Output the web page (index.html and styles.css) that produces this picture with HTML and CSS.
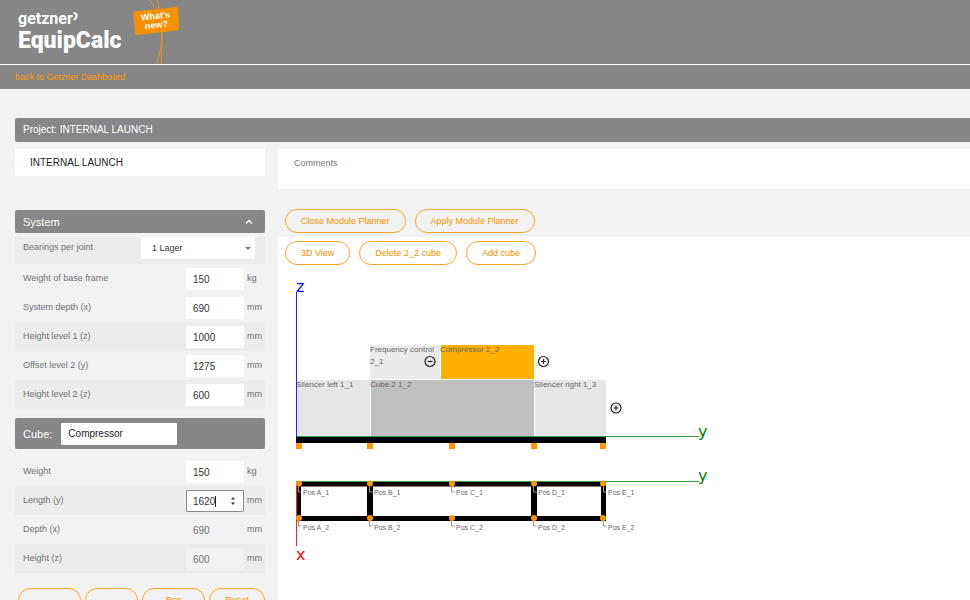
FILE: index.html
```html
<!DOCTYPE html>
<html lang="en">
<head>
<meta charset="utf-8">
<title>getzner EquipCalc</title>
<link rel="stylesheet" href="styles.css">
</head>
<body>
<header class="header">
  <div class="brand">
    <div class="brand-name">getzner<svg class="brand-mark" viewBox="0 0 5 10" aria-hidden="true"><path d="M0.5 1C3 1.2 4 2.5 3.6 4.2C3.2 5.8 2 7 1 8"/></svg></div>
    <div class="brand-product">EquipCalc</div>
  </div>
  <a class="news" href="#news">
    <svg class="news-strings" viewBox="0 0 46 64" aria-hidden="true">
      <path d="M17 0C19 4 21 6 22 10M24 0C26 3 26 6 25 10M29 32C29 45 27 54 23 64M29 32C29 44 28.500 54 28 64"/>
      <path class="news-tag" d="M1.500 11.500L43 7Q45 7 45.200 8.500L46 28.500Q46 30 44.500 30.500L4.500 35Q2.500 35 2.300 33.500L0 13.500Q0 12 1.500 11.500Z"/>
    </svg>
    <span class="news-text">What's<br>new?</span>
  </a>
</header>
<nav class="nav"><a href="#dashboard">back to Getzner Dashboard</a></nav>

<main class="page">
  <h1 class="bar project-bar">Project: INTERNAL LAUNCH</h1>
  <div class="columns">
    <aside class="side">
      <input class="project-name" aria-label="Project name" value="INTERNAL LAUNCH">

      <h2 class="bar system-bar">System
        <svg class="chevron" viewBox="0 0 8 6" aria-hidden="true"><path d="M1 4.500L4 1.500L7 4.500"/></svg>
      </h2>
      <div class="row shaded first">
        <label for="bearings">Bearings per joint</label>
        <div class="select-wrap"><select id="bearings"><option>1 Lager</option></select></div>
      </div>
      <div class="row"><label for="frame">Weight of base frame</label><input id="frame" value="150"><span class="unit">kg</span></div>
      <div class="row"><label for="sdepth">System depth (x)</label><input id="sdepth" value="690"><span class="unit">mm</span></div>
      <div class="row shaded"><label for="h1">Height level 1 (z)</label><input id="h1" value="1000"><span class="unit">mm</span></div>
      <div class="row"><label for="o2">Offset level 2 (y)</label><input id="o2" value="1275"><span class="unit">mm</span></div>
      <div class="row shaded"><label for="h2">Height level 2 (z)</label><input id="h2" value="600"><span class="unit">mm</span></div>

      <div class="bar cube-bar"><label for="cube">Cube:</label><input id="cube" value="Compressor"></div>
      <div class="row"><label for="weight">Weight</label><input id="weight" value="150"><span class="unit">kg</span></div>
      <div class="row shaded">
        <label for="length">Length (y)</label>
        <div class="stepper">
          <input id="length" value="1620"><i class="caret"></i>
          <svg viewBox="0 0 6 10" aria-hidden="true"><path d="M1 3.500L3 1L5 3.500ZM1 6.500L3 9L5 6.500Z"/></svg>
        </div>
        <span class="unit">mm</span>
      </div>
      <div class="row"><label for="depth">Depth (x)</label><input id="depth" value="690" disabled><span class="unit">mm</span></div>
      <div class="row shaded"><label for="height">Height (z)</label><input id="height" value="600" disabled><span class="unit">mm</span></div>
      <div class="side-actions">
        <button class="pill" type="button" aria-label="Previous"></button>
        <button class="pill" type="button" aria-label="Next"></button>
        <button class="pill" type="button">Bsp</button>
        <button class="pill" type="button">Reset</button>
      </div>
    </aside>

    <section class="work">
      <textarea class="comments" aria-label="Comments" placeholder="Comments"></textarea>
      <div class="toolbar">
        <button class="pill" type="button">Close Module Planner</button>
        <button class="pill" type="button">Apply Module Planner</button>
      </div>
      <div class="planner">
        <div class="toolbar">
          <button class="pill" type="button">3D View</button>
          <button class="pill" type="button">Delete 2_2 cube</button>
          <button class="pill" type="button">Add cube</button>
        </div>
        <svg class="drawing" width="440" height="330" viewBox="0 0 440 330" role="img" aria-label="Front and plan view">
          <!-- front view -->
          <rect class="light" x="19" y="110" width="73" height="56"/>
          <rect class="mid" x="93" y="110" width="163" height="56"/>
          <rect class="light" x="257" y="110" width="71" height="56"/>
          <rect class="pale" x="92" y="75" width="70" height="34"/>
          <rect class="active" x="163" y="75" width="93" height="34"/>
          <g class="caption">
            <text x="18" y="117">Silencer left 1_1</text>
            <text x="92" y="117">Cube 2 1_2</text>
            <text x="256" y="117">Silencer right 1_3</text>
            <text x="92" y="82">Frequency control</text>
            <text x="92" y="94">2_1</text>
            <text x="162" y="82">Compressor 2_2</text>
          </g>
          <rect x="18" y="167" width="310" height="6"/>
          <path class="foot" d="M18 173h6v6h-6zM89 173h6v6h-6zM171 173h6v6h-6zM253 173h6v6h-6zM322 173h6v6h-6z"/>
          <path class="axis-y" d="M18 166.500H421"/>
          <path class="axis-z" d="M18.500 22V167"/>
          <text class="axis name-z" x="18" y="22">z</text>
          <text class="axis name-y" x="420" y="167">y</text>
          <g class="knob">
            <circle cx="152" cy="91.500" r="5"/><path d="M149.500 91.500h5"/>
            <circle cx="265.500" cy="91.500" r="5"/><path d="M263 91.500h5M265.500 89v5"/>
            <circle cx="338" cy="138" r="5"/><path d="M335.500 138h5M338 135.500v5"/>
          </g>
          <!-- plan view -->
          <path fill-rule="evenodd" d="M18 212H328V251H18ZM23 216.500V246H89V216.500ZM95 216.500V246H253V216.500ZM259 216.500V246H323V216.500Z"/>
          <path class="axis-y" d="M18 211.500H421"/>
          <path class="axis-x" d="M18.500 212V276"/>
          <text class="axis name-y" x="420" y="211">y</text>
          <text class="axis name-x" x="18" y="290">x</text>
          <path class="leader" d="M20.500 214v8h3M91.500 214v8h3M173.500 214v8h3M255.500 214v8h3M325.500 214v8h3M20.500 248v8h3M91.500 248v8h3M173.500 248v8h3M255.500 248v8h3M325.500 248v8h3"/>
          <g class="foot">
            <circle cx="21" cy="213.500" r="3"/><circle cx="92" cy="213.500" r="3"/><circle cx="174" cy="213.500" r="3"/><circle cx="256" cy="213.500" r="3"/><circle cx="325" cy="213.500" r="3"/>
            <circle cx="21" cy="248" r="3"/><circle cx="92" cy="248" r="3"/><circle cx="174" cy="248" r="3"/><circle cx="256" cy="248" r="3"/><circle cx="325" cy="248" r="3"/>
          </g>
          <g class="pos">
            <text x="25" y="225">Pos A_1</text><text x="96" y="225">Pos B_1</text><text x="178" y="225">Pos C_1</text><text x="260" y="225">Pos D_1</text><text x="330" y="225">Pos E_1</text>
            <text x="25" y="260">Pos A_2</text><text x="96" y="260">Pos B_2</text><text x="178" y="260">Pos C_2</text><text x="260" y="260">Pos D_2</text><text x="330" y="260">Pos E_2</text>
          </g>
        </svg>
      </div>
    </section>
  </div>
</main>
</body>
</html>
```
FILE: styles.css
```css
* { box-sizing: border-box; }
body {
  margin: 0;
  height: 100vh;
  overflow: hidden;
  background: #f2f2f2;
  color: #707173;
  font: 9px/12px "Liberation Sans", Arial, sans-serif;
}
input, select, textarea, button { font: inherit; color: inherit; margin: 0; border: 0; }

.header { display: flex; gap: 12px; height: 64px; padding-left: 18px; background: #868686; }
.brand { padding-top: 10px; color: #fff; font-family: Roboto, sans-serif; font-weight: 700; }
.brand-name { font-size: 16px; line-height: 18px; }
.brand-mark { width: 5px; height: 10px; margin-bottom: 2px; fill: none; stroke: #fff; stroke-width: 2; }
.brand-product { font-size: 23px; line-height: 26px; font-weight: 900; }
.news { position: relative; width: 46px; height: 64px; color: #fff; text-decoration: none; }
.news-strings { display: block; width: 46px; height: 64px; fill: none; stroke: #e8961e; stroke-width: 1; }
.news-tag { fill: #f59100; stroke: none; }
.news-text {
  position: absolute; left: 0; top: 12px; width: 46px;
  font-weight: 700; line-height: 9px; text-align: center; transform: rotate(-6deg);
}
.nav { height: 24px; margin-top: 1px; padding: 6px 15px; background: #868686; box-shadow: 0 -1px #fff; }
.nav a { color: #f90; text-decoration: none; }

.page { padding: 29px 0 0 15px; }
.bar {
  display: flex; align-items: center; margin: 0; padding: 0 8px;
  background: #868788; color: #fff; border-radius: 2px;
  font-size: 11px; font-weight: 400; line-height: 14px;
}
.project-bar { height: 24px; border-radius: 2px 0 0 2px; font-size: 10px; }
.columns { display: grid; grid-template-columns: 250px 1fr; column-gap: 13px; padding-top: 7px; }
.project-name { display: block; width: 100%; height: 27px; padding: 0 15px; background: #fff; color: #222; font-size: 10px; }
.system-bar { justify-content: space-between; height: 23px; margin-top: 34px; padding-right: 12px; }
.chevron { width: 8px; height: 6px; fill: none; stroke: #fff; stroke-width: 1.3; }

.row { display: flex; align-items: center; height: 29px; padding-left: 8px; }
.row.first { height: 27px; margin-top: 4px; align-items: flex-start; padding-right: 10px; }
.row.first label { padding-top: 4px; }
.shaded { background: #ececec; }
.row label { flex: 1; padding-bottom: 2px; }
.row input { width: 58px; height: 22px; padding: 2px 7px 0; background: #fff; color: #333; font-size: 10px; border-radius: 1px; }
.row input:disabled { background: #f2f2f2; color: #707173; }
.unit { width: 21px; padding: 0 0 2px 3px; }
.select-wrap { position: relative; width: 114px; height: 22px; background: #fff; }
.select-wrap::after {
  content: ""; position: absolute; right: 4px; top: 10px;
  border: 3px solid transparent; border-top-color: #777; border-bottom: 0;
}
.select-wrap select { width: 100%; height: 100%; padding: 0 11px; appearance: none; background: none; color: #333; }
.stepper { position: relative; }
.row .stepper input { display: block; padding: 1px 6px 0; border: 1px solid #8a8a8a; }
.stepper svg { position: absolute; right: 8px; top: 6px; width: 6px; height: 10px; fill: #333; }
.caret { position: absolute; left: 29px; top: 6px; width: 1px; height: 11px; background: #222; }
.cube-bar { gap: 9px; height: 31px; margin: 9px 0 8px; }
.cube-bar input { width: 116px; height: 22px; padding: 0 7px; background: #fff; color: #222; font-size: 10px; border-radius: 1px; }

.pill { height: 24px; padding: 0 15px; border: 1px solid #f8a52c; border-radius: 12px; background: transparent; color: #f59100; white-space: nowrap; }
.side-actions { display: grid; grid-template-columns: 63px 53px 63px 56px; gap: 4px; padding: 15px 0 0 3px; }
.side-actions .pill { padding: 0; }

.comments { display: block; width: 100%; height: 40px; padding: 8px 16px; resize: none; background: #fff; }
.comments::placeholder { color: #777; opacity: 1; }
.toolbar { display: flex; gap: 9px; padding-left: 7px; }
.work > .toolbar { padding-top: 20px; padding-bottom: 4px; }
.planner { min-height: 400px; padding-top: 4px; background: #fff; }
.drawing { display: block; margin-top: 5px; }
.light { fill: #e6e6e6; }
.mid { fill: #c0c0c0; }
.pale { fill: #ebebeb; }
.active { fill: #ffb000; }
.caption, .pos { fill: #666; font-size: 8px; }
.pos { font-size: 7px; }
.foot { fill: #ff9500; }
.axis { font-family: "DejaVu Sans", sans-serif; font-size: 16px; }
.axis-y, .axis-z, .axis-x, .leader { fill: none; stroke-width: 1; }
.axis-y { stroke: #35a040; }
.axis-z { stroke: #22f; }
.axis-x { stroke: #f22; }
.leader { stroke: #999; }
.name-z { fill: #00f; }
.name-y { fill: #008000; }
.name-x { fill: #f00; }
.knob { fill: none; stroke: #222; stroke-width: 1.2; }
```
